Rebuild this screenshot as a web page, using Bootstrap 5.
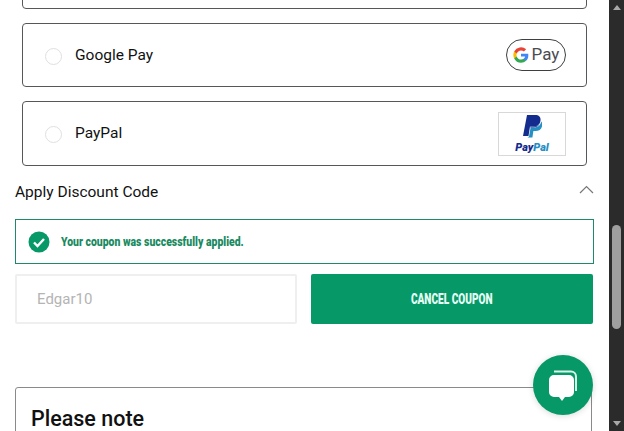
<!DOCTYPE html>
<html lang="en">
<head>
    <meta charset="UTF-8">
    <meta name="viewport" content="width=device-width, initial-scale=1">
    <title>Checkout</title>
    <link rel="stylesheet" href="https://cdn.jsdelivr.net/npm/bootstrap@5.3.0/dist/css/bootstrap.min.css">
    <style>
        html, body {
            height: 431px;
            overflow: hidden;
        }
        body {
            background: #fff;
            color: #111;
            font-family: "Roboto", "Liberation Sans", sans-serif;
        }
        .page-area {
            width: 609px;
            height: 431px;
            overflow: hidden;
            flex: none;
        }
        .pay-list {
            margin: -55px 22px 0 22px;
            width: 565px;
        }
        .pay-option {
            height: 64px;
            border: 1px solid #55585a;
            border-radius: 4px;
            margin-bottom: 14px;
            padding: 0 20px 0 22px;
        }
        .pay-option.tall {
            height: 65px;
            margin-bottom: 0;
        }
        .pay-radio {
            width: 17px;
            height: 17px;
            border: 1.5px solid #e0e0e0;
            border-radius: 50%;
            margin-right: 13px;
            margin-top: 2px;
        }
        .pay-label {
            font-size: 15.5px;
            padding-top: 1px;
        }
        .gpay-logo {
            width: 60px;
            height: 32px;
            border: 1px solid #3c4043;
            border-radius: 16px;
            font-size: 17px;
            color: #4a4d50;
            gap: 3px;
        }
        .paypal-logo {
            width: 68px;
            height: 44px;
            border: 1px solid #d8d8d8;
            flex-direction: column;
        }
        .paypal-word {
            font-size: 11px;
            line-height: 10px;
            font-weight: 900;
            font-style: italic;
            color: #142c8e;
        }
        .paypal-word span {
            color: #2790c3;
        }
        .discount-head {
            margin: 17px 15px 0 15px;
            height: 19px;
            font-size: 15.5px;
        }
        .discount-chevron {
            margin-bottom: 6px;
        }
        .coupon-ok {
            margin: 17px 15px 0 15px;
            height: 45px;
            border: 1px solid #1f8a6a;
            padding-left: 12px;
        }
        .coupon-ok-text {
            margin-left: 11px;
            font-weight: 900;
            font-size: 12px;
            color: #1a8a5f;
            transform: scaleX(.87);
            transform-origin: left center;
            white-space: nowrap;
        }
        .coupon-row {
            margin: 10px 16px 0 15px;
            gap: 14px;
        }
        .coupon-input {
            width: 282px;
            height: 50px;
            border: 2px solid #efefef;
            border-radius: 2px;
            padding: 1px 0 0 20px;
            font-size: 15px;
            color: #b4b4b4;
        }
        .coupon-btn {
            width: 282px;
            height: 50px;
            background: #079868;
            border: 0;
            border-radius: 2px;
            color: #e6fff5;
            font-weight: 900;
            font-size: 14px;
        }
        .coupon-btn span {
            display: inline-block;
            transform: scale(.72, 1.1);
            white-space: nowrap;
        }
        .note-box {
            margin: 63px 17px 0 15px;
            height: 120px;
            border: 1px solid #8a8a8a;
            border-radius: 3px 3px 0 0;
            padding: 18px 15px;
        }
        .note-box h2 {
            font-size: 21.5px;
            font-weight: 500;
            color: #111;
            margin: 0;
        }
        .chat-btn {
            position: absolute;
            left: 533px;
            top: 355px;
            width: 60px;
            height: 60px;
            border-radius: 50%;
            background: #079868;
            box-shadow: 0 1px 6px rgba(0, 0, 0, .15);
        }
        .scroll-track {
            width: 15px;
            height: 431px;
            background: #2b2b2b;
            flex: none;
            padding: 5px 3px;
        }
        .scroll-thumb {
            position: absolute;
            top: 225px;
            left: 612px;
            width: 9px;
            height: 104px;
            border-radius: 5px;
            background: #9f9f9f;
        }
        .scroll-up, .scroll-down {
            width: 0;
            height: 0;
            border-left: 4.5px solid transparent;
            border-right: 4.5px solid transparent;
        }
        .scroll-up {
            border-bottom: 5px solid #a8a8a8;
        }
        .scroll-down {
            border-top: 5px solid #a8a8a8;
        }
    </style>
</head>
<body class="d-flex m-0 position-relative">
    <div class="page-area">
        <div class="pay-list">
            <div class="pay-option"></div>
            <div class="pay-option d-flex align-items-center">
                <div class="pay-radio"></div>
                <div class="pay-label">Google Pay</div>
                <div class="gpay-logo d-flex align-items-center justify-content-center ms-auto">
                    <svg width="16" height="16" viewBox="0 0 24 24">
                        <path fill="#4285f4" d="M23 12.3c0-.8-.1-1.600-.2-2.300H12v4.400h6.200a5.300 5.300 0 0 1-2.300 3.500v2.900h3.700c2.200-2 3.400-5 3.400-8.500z"/>
                        <path fill="#34a853" d="M12 23.500c3.100 0 5.700-1 7.600-2.800l-3.700-2.900c-1 .7-2.300 1.100-3.900 1.100-3 0-5.500-2-6.400-4.700H1.800v3A11.500 11.500 0 0 0 12 23.500z"/>
                        <path fill="#fbbc05" d="M5.600 14.200a6.900 6.900 0 0 1 0-4.400v-3H1.800a11.500 11.500 0 0 0 0 10.400z"/>
                        <path fill="#ea4335" d="M12 5.100c1.700 0 3.200.6 4.400 1.700l3.300-3.300A11.500 11.500 0 0 0 1.800 6.800l3.800 3C6.500 7.100 9 5.100 12 5.100z"/>
                    </svg>
                    <span>Pay</span>
                </div>
            </div>
            <div class="pay-option tall d-flex align-items-center">
                <div class="pay-radio"></div>
                <div class="pay-label">PayPal</div>
                <div class="paypal-logo d-flex align-items-center justify-content-center ms-auto">
                    <svg width="20" height="24" viewBox="0 0 20 24">
                        <path fill="#142c8e" d="M5 0h8c4 0 6 2 5.500 5.500C18 9.500 15 11.500 11 11.500H8L6.500 21H1z"/>
                        <path fill="#2790c3" d="M7 21.500l1.600-9h3c4.500 0 7-2.200 7.600-6 1 1 1.300 2.300 1 4-.6 3.500-3 5.500-6.800 5.500h-2l-1 6.500H5.500z"/>
                        <path fill="#1f3a9e" d="M8 11.500h3c3 0 5.500-1.100 6.800-3.300-1 3-3.500 4.300-6.800 4.300H8.300z"/>
                    </svg>
                    <div class="paypal-word mt-1">Pay<span>Pal</span></div>
                </div>
            </div>
        </div>

        <div class="discount-head d-flex align-items-center justify-content-between">
            <span>Apply Discount Code</span>
            <svg class="discount-chevron" width="15" height="9" viewBox="0 0 15 9">
                <path d="M1 8l6.500-6.500L14 8" fill="none" stroke="#777" stroke-width="1.200"/>
            </svg>
        </div>

        <div class="coupon-ok d-flex align-items-center">
            <svg width="22" height="22" viewBox="0 0 22 22">
                <circle cx="11" cy="11" r="10.500" fill="#079868"/>
                <path d="M6 11.500l3.500 3.500L16 8" fill="none" stroke="#fff" stroke-width="2.400"/>
            </svg>
            <span class="coupon-ok-text">Your coupon was successfully applied.</span>
        </div>

        <div class="coupon-row d-flex">
            <div class="coupon-input d-flex align-items-center">Edgar10</div>
            <button type="button" class="coupon-btn"><span>CANCEL COUPON</span></button>
        </div>

        <div class="note-box">
            <h2>Please note</h2>
        </div>
    </div>

    <div class="chat-btn d-flex align-items-center justify-content-center">
        <svg width="34" height="36" viewBox="0 0 34 36">
            <path d="M8 4.500h17a5 5 0 0 1 5 5V24" fill="none" stroke="#d8f3e8" stroke-width="2"/>
            <path fill="#fff" d="M8 8h15a5 5 0 0 1 5 5v12a5 5 0 0 1-5 5h-4l-3 4-3-4H8a5 5 0 0 1-5-5V13a5 5 0 0 1 5-5z"/>
        </svg>
    </div>

    <div class="scroll-track d-flex flex-column justify-content-between align-items-center">
        <div class="scroll-up"></div>
        <div class="scroll-down"></div>
    </div>
    <div class="scroll-thumb"></div>
    <script src="https://cdn.jsdelivr.net/npm/bootstrap@5.3.0/dist/js/bootstrap.bundle.min.js"></script>
</body>
</html>
